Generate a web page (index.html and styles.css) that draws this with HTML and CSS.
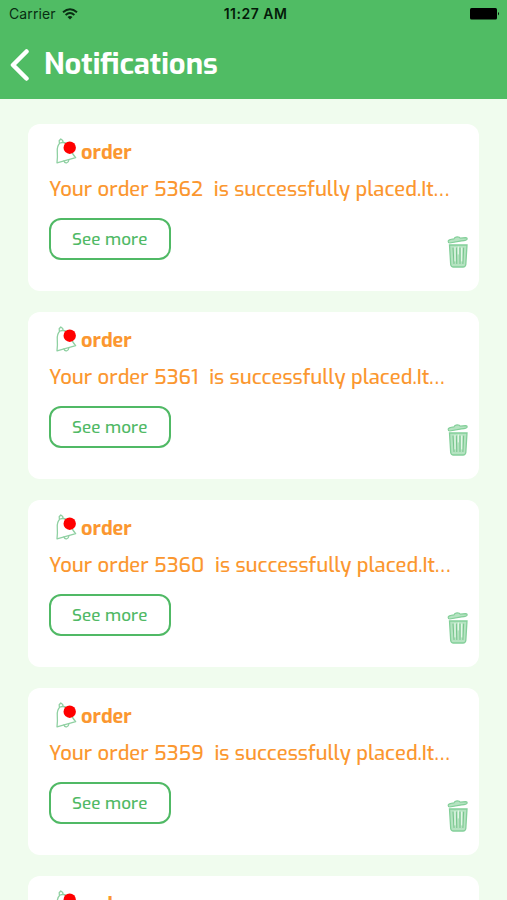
FILE: index.html
```html
<!DOCTYPE html>
<html lang="en">
<head>
<meta charset="utf-8">
<title>Notifications</title>
<link rel="stylesheet" href="styles.css">
</head>
<body>
<svg class="symbols" aria-hidden="true">
  <symbol id="bell" viewBox="0 0 24 28">
    <g fill="none" stroke="#8fd0a2" stroke-width="1.3" stroke-linecap="round" stroke-linejoin="round">
      <path d="M5 5C2.4 7.2 2 10.600 2.300 14C2.600 18 2.500 21 2 24.800L20.700 19.600C17.500 16.600 16.500 14 15.300 10C14.100 6 10 3.400 5 5Z"/>
      <path d="M4.400 5L4.200 2.800L5.800 1L7.700 2.400L8 4.200M9 23C9.800 26 13.700 25.200 13.800 22"/>
    </g>
    <circle cx="14.700" cy="9.700" r="6.200" fill="#ff0000"/>
  </symbol>
  <symbol id="trash" viewBox="0 0 22 32">
    <path d="M2.500 9H20L18.800 28.500Q18.500 31 16 31H6.500Q4 31 3.700 28.500Z" fill="#b5e3c1" stroke="#83cf99" stroke-width="1.300"/>
    <path d="M1.200 5.200Q1.500 3.400 7 2.800Q7.500 1 10 0.900Q12.700 0.800 13.300 2.200L18.600 1.600Q20.300 1.600 20.100 3.200Q19.800 4.600 14.500 4.900L2.600 7Q1.200 7 1.200 5.200Z" fill="#b5e3c1" stroke="#83cf99" stroke-width="1.200" stroke-linejoin="round"/>
    <path d="M6 12L7 27.500M9.300 12L9.800 27.500M13 12V27.500M16.600 12L15.900 27.500" fill="none" stroke="#79c68e" stroke-width="1.100" stroke-linecap="round"/>
    <path d="M8 11.500V25M11.300 11V18M14.700 12V25" fill="none" stroke="#eefaf0" stroke-width="1" stroke-linecap="round"/>
  </symbol>
</svg>
<header class="header">
  <div class="status">
    <div class="carrier"><span class="carrier-name">Carrier</span>
      <svg width="16" height="12" viewBox="0 0 16 12" fill="none" stroke="#082d12" stroke-width="1.900"><path d="M1 4.300Q8-1.900 15 4.300M3.600 7Q8 3.200 12.400 7"/><path d="M5.500 8.900Q8 6.900 10.500 8.900L8 11.500Z" fill="#082d12" stroke="none"/></svg>
    </div>
    <span class="time">11:27 AM</span>
    <svg class="battery" width="30" height="12" viewBox="0 0 30 12"><rect x="0" y="0" width="27" height="11.500" rx="1.500"/><path d="M28 4Q30 5.700 28 7.500Z"/></svg>
  </div>
  <div class="nav">
    <svg width="20" height="34" viewBox="0 0 20 34" fill="none" stroke="#fff" stroke-width="4.500" stroke-linecap="round" stroke-linejoin="round"><path d="M16.500 3.500L3 17L16.500 30.500"/></svg>
    <h1 class="title">Notifications</h1>
  </div>
</header>
<main class="list">
  <article class="card">
    <div class="card-head"><svg class="bell"><use href="#bell"/></svg><h2 class="kind">order</h2></div>
    <p class="message">Your order 5362  is successfully placed.It<span class="dots">...</span></p>
    <div class="actions"><button class="more">See more</button><svg class="trash"><use href="#trash"/></svg></div>
  </article>
  <article class="card">
    <div class="card-head"><svg class="bell"><use href="#bell"/></svg><h2 class="kind">order</h2></div>
    <p class="message">Your order 5361  is successfully placed.It<span class="dots">...</span></p>
    <div class="actions"><button class="more">See more</button><svg class="trash"><use href="#trash"/></svg></div>
  </article>
  <article class="card">
    <div class="card-head"><svg class="bell"><use href="#bell"/></svg><h2 class="kind">order</h2></div>
    <p class="message">Your order 5360  is successfully placed.It<span class="dots">...</span></p>
    <div class="actions"><button class="more">See more</button><svg class="trash"><use href="#trash"/></svg></div>
  </article>
  <article class="card">
    <div class="card-head"><svg class="bell"><use href="#bell"/></svg><h2 class="kind">order</h2></div>
    <p class="message">Your order 5359  is successfully placed.It<span class="dots">...</span></p>
    <div class="actions"><button class="more">See more</button><svg class="trash"><use href="#trash"/></svg></div>
  </article>
  <article class="card">
    <div class="card-head"><svg class="bell"><use href="#bell"/></svg><h2 class="kind">order</h2></div>
  </article>
</main>
</body>
</html>
```
FILE: styles.css
```css
* { box-sizing: border-box; }
body {
  margin: 0;
  height: 900px;
  overflow: hidden;
  background: #f0fcee;
  font-family: Exo, "Exo 2", Roboto, sans-serif;
}
h1, h2, p { margin: 0; }
svg { display: block; flex: none; }
.symbols { display: none; }
.header { height: 98.500px; background: #50bc64; }
.status {
  height: 27px;
  display: grid;
  grid-template-columns: 1fr auto 1fr;
  align-items: center;
  padding: 0 7px 0 9px;
  font-family: Inter, sans-serif;
  font-size: 14px;
  color: #082d12;
}
.carrier { display: flex; align-items: center; gap: 6px; }
.carrier-name { letter-spacing: 0.100px; }
.time { font-weight: 600; color: #041a09; letter-spacing: 0.500px; margin-left: 2px; }
.battery { justify-self: end; fill: #000; }
.nav { height: 72px; display: flex; align-items: center; gap: 14px; padding: 0 0 0 10px; }
.nav svg { margin-top: 4px; }
.title { margin-top: 3px; color: #fff; font-size: 29.200px; line-height: 36px; font-weight: 700; }
.list { display: flex; flex-direction: column; gap: 20.500px; padding: 25px 28px 0; }
.card { height: 167.500px; flex: none; padding: 12px 9px 0 21px; border-radius: 12px; background: #fff; }
.card-head { display: flex; align-items: center; height: 30px; gap: 2px; padding-left: 6px; }
.bell { width: 24px; height: 28px; margin-top: 2px; }
.kind { margin-top: 4px; color: #fb9730; font-size: 20px; line-height: 30px; font-weight: 700; }
.message { height: 30px; margin-top: 9px; color: #fb9730; font-size: 20.250px; line-height: 30px; font-weight: 500; white-space: pre; }
.dots { letter-spacing: 1.300px; }
.actions { display: flex; justify-content: space-between; margin-top: 13px; }
.more {
  width: 122.500px;
  height: 42.500px;
  margin-left: -0.500px;
  padding: 1px 0 0;
  border: 2px solid #50b965;
  border-radius: 12px;
  background: #fff;
  color: #50b965;
  font: 500 17.100px/38px Exo, "Exo 2", Roboto, sans-serif;
}
.trash { width: 22px; height: 32px; margin: 18px 1px 0 0; }
```
